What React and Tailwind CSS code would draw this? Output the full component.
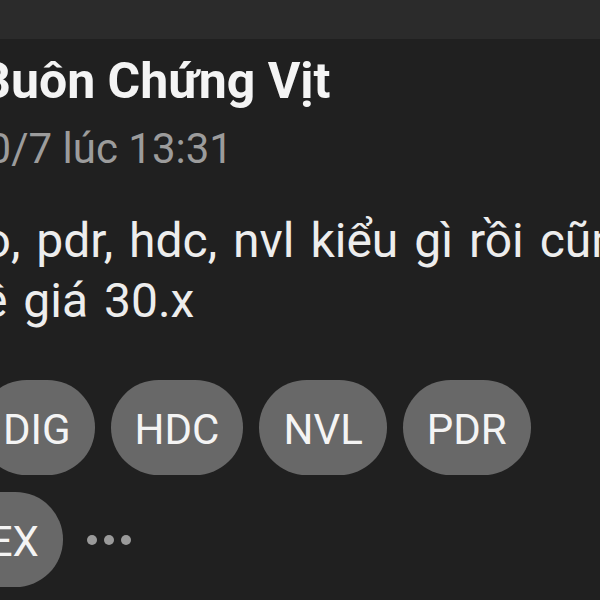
import React from 'react';

const chipRowOne = ['DIG', 'HDC', 'NVL', 'PDR'];

function Chip({ label }) {
  return (
    <div className="h-[95px] px-6 rounded-full bg-[#686868] flex items-center pt-1 text-[42px] text-[#f4f4f4] shrink-0 leading-none">
      {label}
    </div>
  );
}

export default function App() {
  return (
    <div className="w-[600px] h-[600px] overflow-hidden bg-[#202020] text-white" style={{ fontFamily: 'Roboto, "Noto Sans", sans-serif' }}>
      <div className="h-[39px] bg-[#2b2b2b]" />

      <div className="pt-[13px] whitespace-nowrap">
        <div className="-ml-[21px] text-[50px] leading-[58px] font-bold text-[#f4f4f4]">Buôn Chứng Vịt</div>
        <div className="-ml-[36px] mt-[13px] text-[42px] leading-[52px] text-[#9c9c9c]">10/7 lúc 13:31</div>

        <div className="mt-[36px] text-[48px] leading-[60px] text-[#ededed] [word-spacing:4px]">
          <div className="-ml-[67px]">ceo, pdr, hdc, nvl kiểu gì rồi cũng</div>
          <div className="-ml-[41px]">về giá 30.x</div>
        </div>
      </div>

      <div className="mt-[49px] -ml-[21px] flex gap-4">
        {chipRowOne.map((c) => (
          <Chip key={c} label={c} />
        ))}
      </div>

      <div className="mt-[17px] -ml-[62px] flex items-center gap-6">
        <Chip label="VEX" />
        <div className="flex gap-[7px]">
          <span className="w-[10px] h-[10px] rounded-full bg-[#9a9a9a]" />
          <span className="w-[10px] h-[10px] rounded-full bg-[#9a9a9a]" />
          <span className="w-[10px] h-[10px] rounded-full bg-[#9a9a9a]" />
        </div>
      </div>
    </div>
  );
}
